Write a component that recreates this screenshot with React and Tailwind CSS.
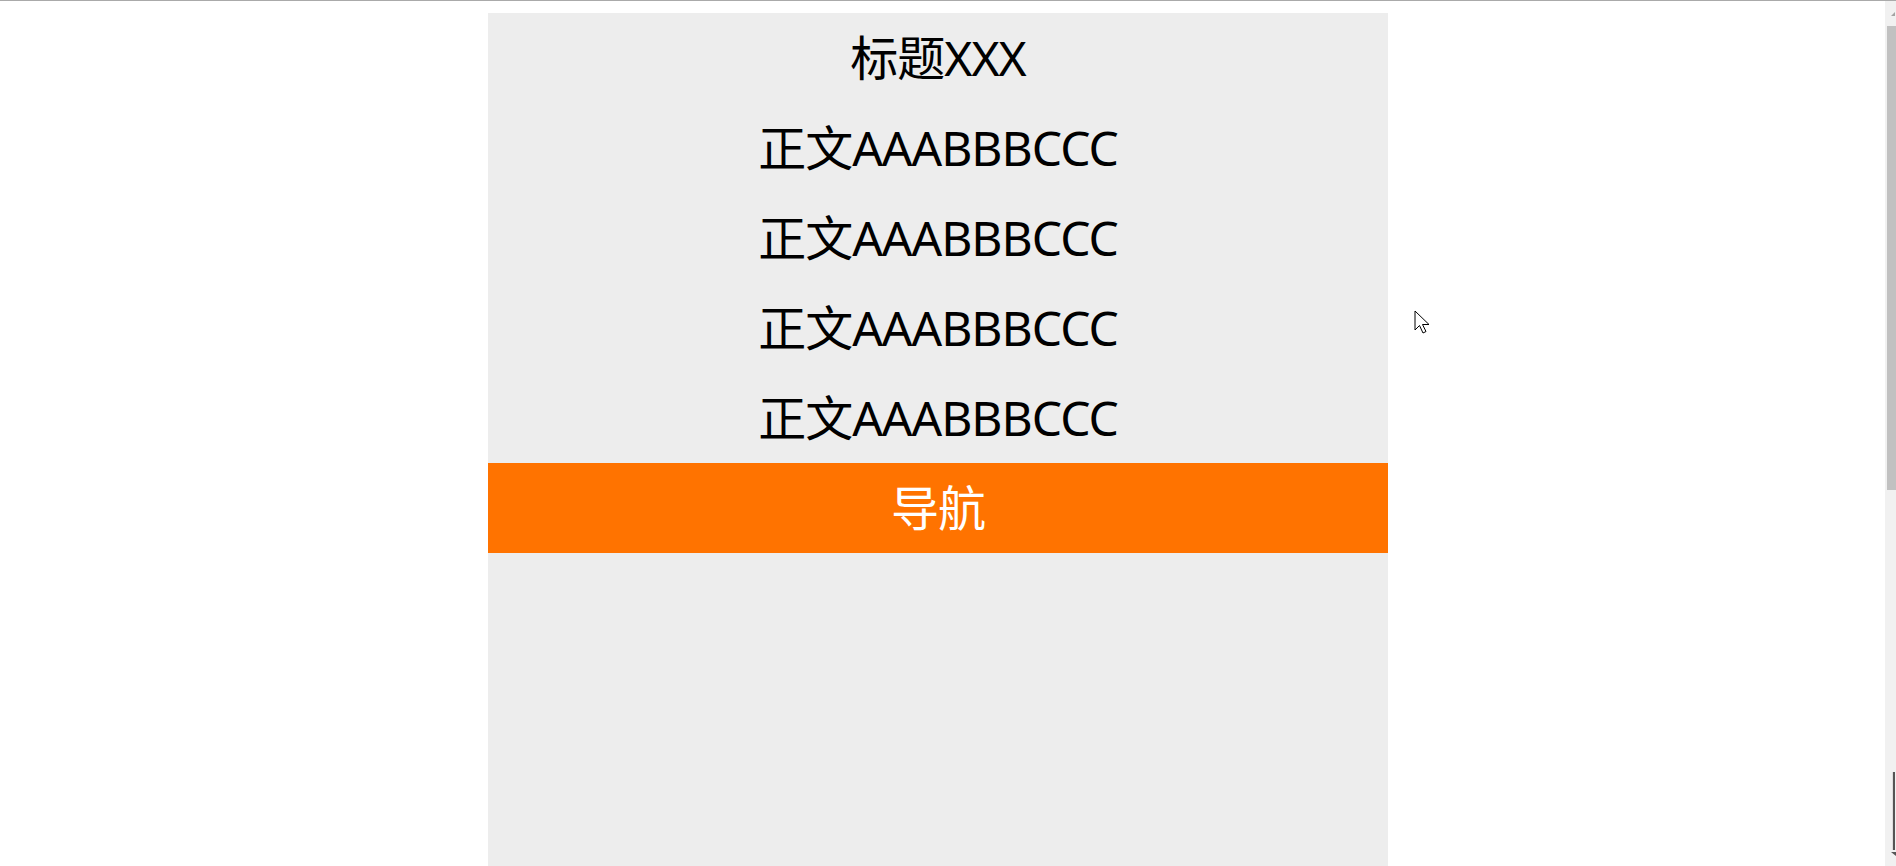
import React from 'react';

const rows = ['正文AAABBBCCC', '正文AAABBBCCC', '正文AAABBBCCC', '正文AAABBBCCC'];

const App = () => {
  return (
    <div
      className="relative min-h-screen bg-white border-t border-[#aaaaaa] flex"
      style={{ fontFamily: '"Noto Sans", "Noto Sans CJK SC", sans-serif' }}
    >
      <main className="flex-1 pt-3 pr-[9px]">
        <div className="w-[900px] h-[1000px] mx-auto bg-[#ededed] flex flex-col tracking-[-1px]">
          <h1 className="h-[90px] flex items-center justify-center text-[48px] font-normal text-black">
            标题XXX
          </h1>
          {rows.map((text, i) => (
            <p key={i} className="h-[90px] flex items-center justify-center text-[48px] text-black">
              {text}
            </p>
          ))}
          <nav className="h-[90px] flex items-center justify-center bg-[#ff7300] text-[48px] text-white">
            导航
          </nav>
        </div>
      </main>

      {/* window scrollbar, cut off at the right edge */}
      <aside className="w-[11px] h-[865px] self-start bg-[#f1f1f1] flex flex-col items-end">
        <div className="h-[25px] w-full flex items-center justify-end pr-[1px]">
          <div className="w-0 h-0 border-l-[4px] border-l-transparent border-b-[4px] border-b-[#a3a3a3]" />
        </div>
        <div className="w-[9px] h-[464px] bg-[#c1c1c1]" />
        <div className="flex-1" />
        <div className="w-[3px] h-[78px] mr-[1px] bg-[#555555] border-l border-[#dddddd]" />
        <div className="h-[16px] w-full flex items-start justify-end pt-[2px]">
          <div className="w-0 h-0 border-l-[5px] border-l-transparent border-t-[4px] border-t-[#555555]" />
        </div>
      </aside>

      {/* mouse pointer from the screenshot */}
      <svg className="absolute left-[1414px] top-[309px]" width="18" height="28" viewBox="0 0 18 28">
        <path
          d="M1 1 L1 20 L5.5 15.5 L9 23 L12 21.5 L8.5 14.5 L15 14.5 Z"
          fill="white"
          stroke="black"
          strokeWidth="1"
          strokeLinejoin="round"
        />
      </svg>
    </div>
  );
};

export default App;
